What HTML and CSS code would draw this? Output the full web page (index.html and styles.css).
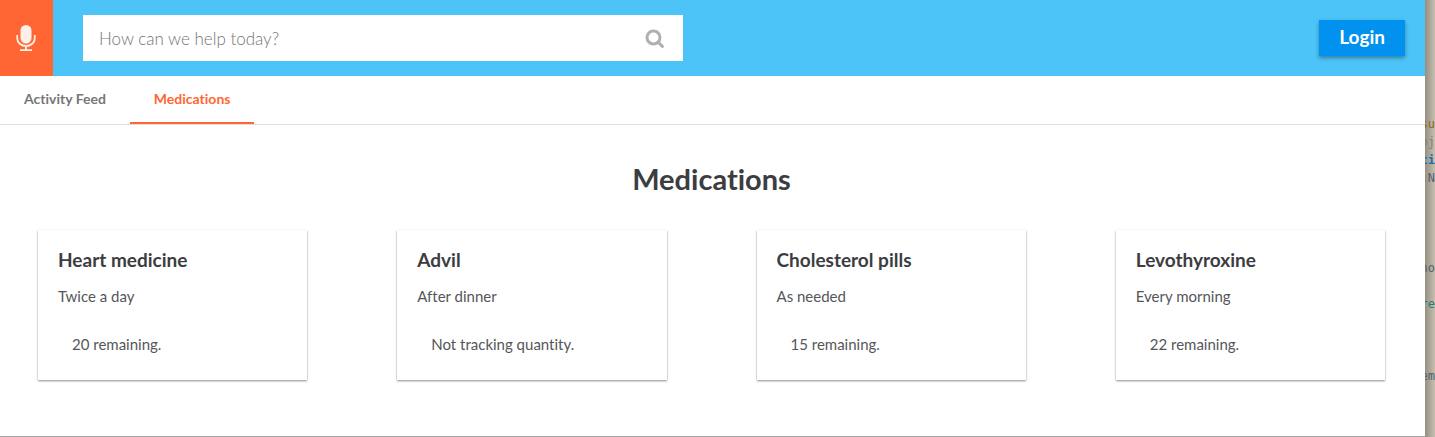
FILE: index.html
```html
<!DOCTYPE html>
<html lang="en">
<head>
  <meta charset="UTF-8" />
  <meta name="viewport" content="width=device-width, initial-scale=1.0" />
  <title>Medications</title>
  <link rel="stylesheet" href="styles.css">
</head>
<body>

  <div class="app">
    <header class="topbar">
      <button class="mic-btn" type="button" aria-label="Speak">
        <svg width="20" height="28" viewBox="0 0 20 28">
          <rect x="4.5" y="1" width="11" height="18.6" rx="5.5" fill="#ffefe9" />
          <path d="M1.2 11v3.2a8.8 7.8 0 0 0 17.6 0V11M10 22v4M4 26.2h12" fill="none" stroke="#ffefe9" stroke-width="1.8" />
        </svg>
      </button>

      <form class="search" role="search">
        <input class="search-input" type="search" aria-label="Search" placeholder="How can we help today?">
        <button class="search-btn" type="button" aria-label="Search">
          <svg width="20" height="20" viewBox="0 0 20 20" fill="none" stroke="#b0b0b0" stroke-width="3">
            <circle cx="8.5" cy="8.5" r="6.5" />
            <path d="M13.2 13.2l4.2 4.2" stroke-linecap="round" />
          </svg>
        </button>
      </form>

      <button class="login-btn" type="button">Login</button>
    </header>

    <nav class="tabs">
      <a class="tab" href="#feed">Activity Feed</a>
      <a class="tab active" href="#medications" aria-current="page">Medications</a>
    </nav>

    <main class="content">
      <h1>Medications</h1>

      <div class="cards">
        <article class="card">
          <h2>Heart medicine</h2>
          <p>Twice a day</p>
          <p class="remaining">20 remaining.</p>
        </article>
        <article class="card">
          <h2>Advil</h2>
          <p>After dinner</p>
          <p class="remaining">Not tracking quantity.</p>
        </article>
        <article class="card">
          <h2>Cholesterol pills</h2>
          <p>As needed</p>
          <p class="remaining">15 remaining.</p>
        </article>
        <article class="card">
          <h2>Levothyroxine</h2>
          <p>Every morning</p>
          <p class="remaining">22 remaining.</p>
        </article>
      </div>
    </main>
  </div>

  <!-- editor window behind the app -->
  <div class="editor" aria-hidden="true">
<pre><span class="yellow">su</span>
<span class="gray">oj</span>
<span class="blue">ti</span>
.N




no

<span class="green">re</span>



em</pre>
  </div>

</body>
</html>
```

FILE: styles.css
```css
* {
  box-sizing: border-box;
}

body {
  margin: 0;
  min-height: 100vh;
  display: flex;
  font-family: Lato, "Open Sans", sans-serif;
  font-variant-ligatures: none;
  color: #3c3d41;
  background: #fff;
}

button {
  border: none;
  font-family: inherit;
  cursor: pointer;
}

.app {
  flex: 1;
  min-width: 0;
  border-bottom: 1px solid #a5a5a5;
}

/* top bar */
.topbar {
  display: flex;
  align-items: center;
  height: 76px;
  padding-right: 20px;
  background: #4dc4f7;
}

.mic-btn {
  display: flex;
  align-items: center;
  justify-content: center;
  align-self: stretch;
  width: 53px;
  padding: 0 2px 0 0;
  background: #ff6633;
}

.search {
  display: flex;
  flex: 0 1 600px;
  height: 46px;
  margin-left: 30px;
  background: #fff;
}

.search-input {
  flex: 1;
  min-width: 0;
  padding: 0 16px;
  border: none;
  outline: none;
  background: none;
  font-family: inherit;
  font-size: 17px;
  font-weight: 300;
  color: #3c3d41;
}

.search-input::placeholder {
  color: #757575;
}

.search-btn {
  display: flex;
  align-items: center;
  padding: 2px 18px 0;
  background: none;
}

.login-btn {
  height: 36px;
  margin-left: auto;
  padding: 0 20px 4px;
  background: #0092ee;
  color: #fff;
  font-size: 19px;
  font-weight: 700;
  box-shadow: 0 2px 4px rgba(0, 0, 0, 0.35);
}

/* tabs */
.tabs {
  display: flex;
  height: 49px;
  border-bottom: 1px solid #dedede;
}

.tab {
  padding: 0 24px;
  border-bottom: 2px solid transparent;
  font-size: 14px;
  font-weight: 700;
  line-height: 46px;
  color: #777;
  text-decoration: none;
}

.tab.active {
  color: #ff6633;
  border-bottom-color: #ff6633;
}

/* medications */
.content {
  padding: 34px 40px 56px 38px;
}

h1 {
  margin: 0 0 31px;
  font-size: 29px;
  font-weight: 700;
  line-height: 40px;
  text-align: center;
}

.cards {
  display: grid;
  grid-template-columns: repeat(4, 1fr);
  gap: 90px;
}

.card {
  min-height: 150px;
  padding: 18px 20px;
  background: #fff;
  box-shadow: 0 1px 2px rgba(0, 0, 0, 0.45);
}

.card h2 {
  margin: 0 0 12px;
  font-size: 19px;
  font-weight: 700;
  line-height: 24px;
}

.card p {
  margin: 0;
  font-size: 15px;
  line-height: 24px;
  color: #55565a;
}

.card .remaining {
  margin: 24px 0 0 14px;
}

/* strip of the editor on the right */
.editor {
  display: flex;
  justify-content: flex-end;
  width: 10px;
  overflow: hidden;
  background: linear-gradient(to right, #958f82, #c8bfb0);
}

.editor pre {
  margin: 115px 0 0;
  font-family: "DejaVu Sans Mono", monospace;
  font-size: 12px;
  line-height: 18px;
  color: #536068;
}

.yellow {
  color: #8a6a0c;
}

.gray {
  color: #7d7f7c;
}

.blue {
  color: #1a70b0;
  font-weight: bold;
}

.green {
  color: #1f7f70;
}
```
